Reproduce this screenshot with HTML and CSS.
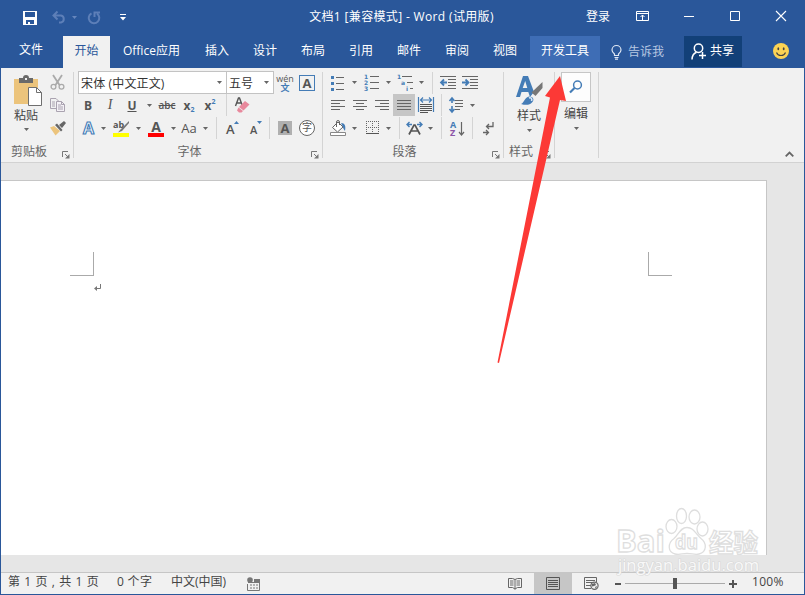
FILE: index.html
```html
<!DOCTYPE html>
<html lang="zh-CN">
<head>
  <meta charset="UTF-8">
  <meta name="viewport" content="width=device-width, initial-scale=1.0">
  <title>文档1 - Word</title>
  <link rel="stylesheet" href="styles.css">
</head>
<body>

<svg class="defs" width="0" height="0">
  <symbol id="caret" viewBox="0 0 5 3"><path d="M0 0h5L2.500 3z" fill="#666"/></symbol>
  <symbol id="launcher" viewBox="0 0 8 8">
    <path d="M.5 6V.5H6M3 3l3 3" fill="none" stroke="#777"/>
    <path d="M7.500 3v4.500H3z" fill="#777"/>
  </symbol>
</svg>

<div class="window">

  <header class="titlebar">
    <div class="quick">
      <svg class="save" width="14" height="14" viewBox="0 0 14 14"><path d="M0 0h14v14H0zM2 1v5h10V1zM3 9v4h2v-2h2v2h4V9z" fill="#fff" fill-rule="evenodd"/></svg>
      <svg class="undo" width="14" height="13" viewBox="0 0 14 13"><path d="M1.500 4.500h7.500a3.600 3.600 0 0 1 0 7H7M5.500 .5l-4 4 4 4" fill="none" stroke="#5d7fb8" stroke-width="2"/></svg>
      <svg class="undo-caret" width="5" height="3" viewBox="0 0 5 3"><path d="M0 0h5L2.500 3z" fill="#6686bd"/></svg>
      <svg class="redo" width="14" height="14" viewBox="0 0 14 14"><path d="M4.500 2.300A5.300 5.300 0 1 0 10 2.600M7.500 6V1.500H13" fill="none" stroke="#5d7fb8" stroke-width="2"/></svg>
      <svg class="more" width="6" height="7" viewBox="0 0 6 7"><path d="M0 0h6v1H0zM0 3h6L3 6.500z" fill="#fff"/></svg>
    </div>
    <div class="title">文档1 [兼容模式] - Word (试用版)</div>
    <div class="login">登录</div>
    <div class="win-btn"><svg width="13" height="10" viewBox="0 0 13 10"><path d="M.5 .5h12v9H.5zM.5 2.500h12M6.500 9V4M4.500 6l2-2 2 2" fill="none" stroke="#fff"/></svg></div>
    <div class="win-btn"><svg width="10" height="10" viewBox="0 0 10 10"><path d="M0 5.500h10" stroke="#fff"/></svg></div>
    <div class="win-btn"><svg width="10" height="10" viewBox="0 0 10 10"><path d="M.5 .5h9v9h-9z" fill="none" stroke="#fff"/></svg></div>
    <div class="win-btn"><svg width="10" height="10" viewBox="0 0 10 10"><path d="M0 0l10 10M10 0L0 10" stroke="#fff" stroke-width="1.100"/></svg></div>
  </header>

  <nav class="tabs">
    <div class="tab file">文件</div>
    <div class="tab active">开始</div>
    <div class="tab office">Office应用</div>
    <div class="tab">插入</div>
    <div class="tab">设计</div>
    <div class="tab">布局</div>
    <div class="tab">引用</div>
    <div class="tab">邮件</div>
    <div class="tab">审阅</div>
    <div class="tab">视图</div>
    <div class="tab dev">开发工具</div>
    <div class="tell">
      <svg width="11" height="15" viewBox="0 0 11 15"><path d="M3.500 10.500V9C2 7.800 1 6.500 1 5a4.500 4.500 0 0 1 9 0c0 1.500-1 2.800-2.500 4v1.500zM3.500 12.500h4M4 14.200h3" fill="none" stroke="#dfe7f3" stroke-width="1.200"/></svg>
      <span>告诉我</span>
    </div>
    <div class="share">
      <svg width="16" height="17" viewBox="0 0 16 17"><circle cx="7.500" cy="5.200" r="4.200" fill="none" stroke="#fff" stroke-width="1.500"/><path d="M1 16.500c0-3.500 1.500-6 4.500-7.300M8 12.500h7M11.500 9v7" fill="none" stroke="#fff" stroke-width="1.500"/></svg>
      <span>共享</span>
    </div>
    <svg class="smile" width="16" height="16" viewBox="0 0 16 16"><circle cx="8" cy="8" r="8" fill="#fcd354"/><ellipse cx="5.300" cy="5.800" rx=".9" ry="1.500" fill="#444"/><ellipse cx="10.700" cy="5.800" rx=".9" ry="1.500" fill="#444"/><path d="M3.500 9.500c1.500 4 7.500 4 9 0" fill="none" stroke="#444" stroke-width="1.100"/></svg>
  </nav>

  <section class="ribbon">

    <!-- 剪贴板 -->
    <div class="group clipboard">
      <div class="group-body">
        <div class="big paste">
          <svg width="28" height="31" viewBox="0 0 28 31">
            <path d="M0 3h24v25H0z" fill="#ecc47c"/>
            <path d="M5 2h4a3 3 0 0 1 6 0h4v5H5z" fill="#6a6a6a"/><path d="M11 2h2v2h-2z" fill="#f1f1f1"/>
            <path d="M14.500 11.500h8l5 5v13h-13z" fill="#fff" stroke="#6f6f6f"/><path d="M22.500 11.500v5h5" fill="none" stroke="#6f6f6f"/>
          </svg>
          <span>粘贴</span>
          <svg class="caret"><use href="#caret"/></svg>
        </div>
        <div class="clip-tools">
          <div class="row r1"><svg width="15" height="15" viewBox="0 0 15 15"><path d="M3 0l6.500 10M12 0L5.500 10" stroke="#aaa" stroke-width="1.800"/><circle cx="3.500" cy="11.700" r="2.400" fill="none" stroke="#aaa" stroke-width="1.300"/><circle cx="11.500" cy="11.700" r="2.400" fill="none" stroke="#aaa" stroke-width="1.300"/></svg></div>
          <div class="row r2"><svg width="15" height="14" viewBox="0 0 15 14"><path d="M6 10.500H.5V.5H6l3 3M2 4h3M2 6h3M2 8h3" fill="none" stroke="#aaa3b0"/><path d="M6.500 3.500h5l3 3v7h-8z" fill="#f4f1f6" stroke="#aaa3b0"/><path d="M11.500 3.500v3h3M8 7h3M8 9h5M8 11h5" fill="none" stroke="#aaa3b0"/></svg></div>
          <div class="row r3"><svg width="16" height="15" viewBox="0 0 16 15"><path d="M0 6.500l4-1.500 6 5-4.500 4.500z" fill="#ecc47c"/><path d="M5 4l2-1.500L12.500 9 11 10.500zM9 4l5-4 2 2-4 5z" fill="#666"/></svg></div>
        </div>
      </div>
      <div class="group-label"><span>剪贴板</span><svg class="launcher"><use href="#launcher"/></svg></div>
    </div>

    <!-- 字体 -->
    <div class="group font">
      <div class="row r1">
        <div class="combo name"><span>宋体 (中文正文)</span><svg class="caret"><use href="#caret"/></svg></div>
        <div class="combo size"><span>五号</span><svg class="caret"><use href="#caret"/></svg></div>
        <div class="btn w22 wen"><span>wén</span><b>文</b></div>
        <div class="btn w22"><span class="boxed">A</span></div>
      </div>
      <div class="row r2">
        <div class="btn w22 glyph bold">B</div>
        <div class="btn w22 glyph italic">I</div>
        <div class="btn w22 glyph under">U</div>
        <div class="btn w12"><svg class="caret"><use href="#caret"/></svg></div>
        <div class="btn w24 strike">abc</div>
        <div class="btn w20 glyph script">x<sub>2</sub></div>
        <div class="btn w22 glyph script">x<sup>2</sup></div>
        <div class="sep erase"></div>
        <div class="btn w30"><svg width="15" height="16" viewBox="0 0 15 16"><path d="M.5 9L3.500 1h1l3 8M2 6h4" fill="none" stroke="#555" stroke-width="1.400"/><path d="M4 10l6-6 4.500 3.500-6 6z" fill="#e8889c"/><path d="M3.500 10.500l4.500 3.500-1.500 1.500H4L2 13.500z" fill="#e8889c"/></svg></div>
      </div>
      <div class="row r3">
        <div class="btn w22"><svg width="15" height="16" viewBox="0 0 15 16"><text x="2" y="14" class="effect">A</text></svg></div>
        <div class="btn w8"><svg class="caret"><use href="#caret"/></svg></div>
        <div class="btn w28"><svg width="16" height="17" viewBox="0 0 16 17"><text x="0" y="8" class="ab">ab</text><path d="M16 1L7.500 9.500 5 12.500l4-1.500L16 3z" fill="#777"/><path d="M0 13h16v4H0z" fill="#ff0"/></svg></div>
        <div class="btn w6"><svg class="caret"><use href="#caret"/></svg></div>
        <div class="btn w30"><svg width="16" height="17" viewBox="0 0 16 17"><text x="3.300" y="12" class="color-a">A</text><path d="M0 13h16v4H0z" fill="#f00"/></svg></div>
        <div class="btn w4"><svg class="caret"><use href="#caret"/></svg></div>
        <div class="btn w28 aa">Aa</div>
        <div class="btn w4"><svg class="caret"><use href="#caret"/></svg></div>
        <div class="sep far"></div>
        <div class="btn w30"><svg width="13" height="17" viewBox="0 0 13 17"><text x="0" y="14" class="grow">A</text><path d="M8 4h5L10.500 1z" fill="#447cb6"/></svg></div>
        <div class="btn w18"><svg width="12" height="17" viewBox="0 0 12 17"><text x="0" y="14" class="shrink">A</text><path d="M7 1h5L9.500 4z" fill="#447cb6"/></svg></div>
        <div class="sep mid"></div>
        <div class="btn w30"><span class="shade">A</span></div>
        <div class="btn w14"><span class="ring">字</span></div>
      </div>
      <div class="group-label"><span>字体</span><svg class="launcher"><use href="#launcher"/></svg></div>
    </div>

    <!-- 段落 -->
    <div class="group para">
      <div class="row r1">
        <div class="btn w22"><svg width="14" height="16" viewBox="0 0 14 16"><path d="M0 1h3v3H0zM0 7h3v3H0zM0 13h3v3H0z" fill="#447cb6"/><path d="M5 2.500h8M5 8.500h8M5 14.500h8" stroke="#666"/></svg></div>
        <div class="btn w10"><svg class="caret"><use href="#caret"/></svg></div>
        <div class="btn w26"><svg width="14" height="17" viewBox="0 0 14 17"><g class="num"><text x="-1" y="5">1</text><text x="-1" y="11">2</text><text x="-1" y="17">3</text></g><path d="M5 2.500h9M5 8.500h9M5 14.500h9" stroke="#666"/></svg></div>
        <div class="btn w6"><svg class="caret"><use href="#caret"/></svg></div>
        <div class="btn w28"><svg width="17" height="17" viewBox="0 0 17 17"><g class="num"><text x="0" y="5">1</text><text x="4" y="11">a</text><text x="9" y="17">i</text></g><path d="M5 2.500h10M10 8.500h6M13 14.500h3" stroke="#666"/></svg></div>
        <div class="btn w4"><svg class="caret"><use href="#caret"/></svg></div>
        <div class="sep far"></div>
        <div class="btn w30"><svg width="16" height="14" viewBox="0 0 16 14"><path d="M0 .5h16M8 3.500h8M8 6.500h8M8 9.500h8M0 12.500h16" stroke="#666"/><path d="M7 6.500H1.500M4 3.500l-3 3 3 3" fill="none" stroke="#447cb6" stroke-width="1.800"/></svg></div>
        <div class="btn w14"><svg width="16" height="14" viewBox="0 0 16 14"><path d="M0 .5h16M8 3.500h8M8 6.500h8M8 9.500h8M0 12.500h16" stroke="#666"/><path d="M0 6.500h5.500M3.500 3.500l3 3-3 3" fill="none" stroke="#447cb6" stroke-width="1.800"/></svg></div>
      </div>
      <div class="row r2">
        <div class="btn w22"><svg width="14" height="11" viewBox="0 0 14 11"><path d="M0 .5h14M0 3.500h9M0 6.500h14M0 9.500h9" stroke="#666"/></svg></div>
        <div class="btn w22"><svg width="14" height="11" viewBox="0 0 14 11"><path d="M0 .5h14M3 3.500h8M0 6.500h14M3 9.500h8" stroke="#666"/></svg></div>
        <div class="btn w22"><svg width="14" height="11" viewBox="0 0 14 11"><path d="M0 .5h14M5 3.500h9M0 6.500h14M5 9.500h9" stroke="#666"/></svg></div>
        <div class="btn w22 on"><svg width="14" height="11" viewBox="0 0 14 11"><path d="M0 .5h14M0 3.500h14M0 6.500h14M0 9.500h14" stroke="#666"/></svg></div>
        <div class="btn w22"><svg width="16" height="16" viewBox="0 0 16 16"><path d="M.5 0v15M15.500 0v15M3 3h10M5 .5L2.500 3 5 5.500M11 .5L13.500 3 11 5.500" fill="none" stroke="#447cb6" stroke-width="1.200"/><path d="M2 7.500h12M2 9.500h12M2 11.500h12M2 13.500h12M2 15.500h8" stroke="#555"/></svg></div>
        <div class="sep spacing"></div>
        <div class="btn w28"><svg width="15" height="16" viewBox="0 0 15 16"><path d="M3 1v5M3 9v6M.5 4L3 1l2.500 3M.5 12L3 15l2.500-3" fill="none" stroke="#447cb6" stroke-width="1.600"/><path d="M6 3.500h8M6 6.500h8M6 9.500h8M6 12.500h5" stroke="#666"/></svg></div>
        <div class="btn w4"><svg class="caret"><use href="#caret"/></svg></div>
      </div>
      <div class="row r3">
        <div class="btn w22"><svg width="16" height="16" viewBox="0 0 16 16"><path d="M2.500 7.500L8 2l5 5-5.500 5z" fill="#fff" stroke="#666"/><path d="M6.500 7V2a1.500 1.500 0 0 1 3 0v3" fill="none" stroke="#666"/><path d="M11 3c4 0 5 3 4 8-1-1-2-3-2-4z" fill="#447cb6"/><path d="M.5 12.500h15v3H.5z" fill="#fff" stroke="#888"/></svg></div>
        <div class="btn w10"><svg class="caret"><use href="#caret"/></svg></div>
        <div class="btn w26"><svg width="13" height="14" viewBox="0 0 13 14"><path d="M0 .5h13M0 6.500h13M.5 0v12M6.500 0v12M12.500 0v12" stroke="#666" stroke-dasharray="1 1"/><path d="M0 12.500h13" stroke="#555"/></svg></div>
        <div class="btn w6"><svg class="caret"><use href="#caret"/></svg></div>
        <div class="sep mid-far"></div>
        <div class="btn w28"><svg width="17" height="14" viewBox="0 0 17 14"><path d="M3 13.500L8 4h1l5 9.500M5 10h7" fill="none" stroke="#555" stroke-width="1.700"/><path d="M1 3.500h5M3.500 1L1 3.500 3.500 6M16 3.500h-5M13.500 1L16 3.500 13.500 6" fill="none" stroke="#447cb6" stroke-width="1.400"/></svg></div>
        <div class="btn w4"><svg class="caret"><use href="#caret"/></svg></div>
        <div class="sep far"></div>
        <div class="btn w30"><svg width="15" height="17" viewBox="0 0 15 17"><text x="0" y="8" class="sa">A</text><text x="0" y="16" class="sz">Z</text><path d="M11.500 2v13M9 12l2.500 3 2.500-3" fill="none" stroke="#666" stroke-width="1.200"/></svg></div>
        <div class="sep near"></div>
        <div class="btn w30"><svg width="11" height="13" viewBox="0 0 11 13"><path d="M10 0v4.500H4M6 2L3.500 4.500 6 7M0 10.500h5M3 8l2.500 2.500L3 13" fill="none" stroke="#666" stroke-width="1.300"/></svg></div>
      </div>
      <div class="group-label"><span>段落</span><svg class="launcher"><use href="#launcher"/></svg></div>
    </div>

    <!-- 样式 -->
    <div class="group style">
      <div class="group-body">
        <div class="big">
          <svg width="28" height="31" viewBox="0 0 28 31"><path d="M1 22L8 1h5l6 16-4 5-1.700-5H6.500L5 22zM7.700 13h4.600L10.200 6z" fill="#447cb6" fill-rule="evenodd"/><path d="M27.500 7v6l-7 8-4-3.500z" fill="#777"/><path d="M6 29c3-1 4-7 8-7.500 4 0 6 3 3 6-2 2.500-6 3-11 1.500z" fill="#447cb6"/><path d="M14 23c2-1 3.500 1 2.500 3" fill="none" stroke="#dceaf7" stroke-width="1.600"/></svg>
          <span>样式</span>
          <svg class="caret"><use href="#caret"/></svg>
        </div>
      </div>
      <div class="group-label"><span>样式</span><svg class="launcher"><use href="#launcher"/></svg></div>
    </div>

    <!-- 编辑 -->
    <div class="group edit">
      <div class="big">
        <div class="find"><svg width="14" height="14" viewBox="0 0 14 14"><circle cx="8.500" cy="5" r="3.900" fill="none" stroke="#447cb6" stroke-width="1.500"/><path d="M5.500 8L1 12.500" stroke="#447cb6" stroke-width="2.200"/></svg></div>
        <span>编辑</span>
        <svg class="caret"><use href="#caret"/></svg>
      </div>
    </div>

    <svg class="collapse" width="9" height="6" viewBox="0 0 9 6"><path d="M.7 5.300L4.500 1.500l3.800 3.800" fill="none" stroke="#666" stroke-width="1.800"/></svg>
  </section>

  <main class="workspace">
    <div class="page">
      <div class="corners">
        <div class="corner left"></div>
        <div class="corner right"></div>
      </div>
      <svg class="enter" width="8" height="8" viewBox="0 0 8 8"><path d="M6.500 0v4.500H2" fill="none" stroke="#777"/><path d="M0 4.500L3 2v5z" fill="#777"/></svg>
    </div>
  </main>

  <footer class="status">
    <span class="pages">第 1 页 , 共 1 页</span>
    <span class="words">0 个字</span>
    <span class="lang">中文(中国)</span>
    <svg class="macro" width="13" height="14" viewBox="0 0 13 14"><path d="M7 2.500h5.500v11H.5V7M1 5.500h11M3 8h2M6 8h2M9 8h2M3 11h2M6 11h2M9 11h2" fill="none" stroke="#777"/><path d="M7 2h6v3H7z" fill="#777"/><circle cx="3" cy="3" r="2.800" fill="#777"/></svg>
    <div class="views">
      <div class="view"><svg width="14" height="13" viewBox="0 0 14 13"><path d="M7 2.500v10M.5 1.500h4L7 2.500l2.500-1h4v9h-4L7 12l-2.500-1.500h-4zM2 4h3.500M2 6h3.500M2 8h3.500M8.500 4H12M8.500 6H12M8.500 8H12" fill="none" stroke="#666"/></svg></div>
      <div class="view on"><svg width="14" height="13" viewBox="0 0 14 13"><path d="M.5 .5h13v12H.5zM2 3.500h10M2 5.500h10M2 7.500h10M2 9.500h10" fill="none" stroke="#555"/></svg></div>
      <div class="view"><svg width="15" height="13" viewBox="0 0 15 13"><path d="M12.500 5V.5H.5v11H7M2 3.500h9M2 5.500h7M2 8.500h5" fill="none" stroke="#666"/><circle cx="10.500" cy="8.800" r="3.600" fill="#f1f1f1" stroke="#666" stroke-width="1.200"/><path d="M8 7l3-1 1 2-2 1-2 .5zM11 10l2-1-1 3z" fill="#666"/></svg></div>
    </div>
    <div class="zoom">
      <i class="minus"></i>
      <div class="track"><i class="thumb"></i></div>
      <svg width="8" height="8" viewBox="0 0 8 8"><path d="M0 4h8M4 0v8" stroke="#555" stroke-width="2"/></svg>
      <span>100%</span>
    </div>
  </footer>

  <svg class="watermark" width="150" height="72" viewBox="0 0 150 72">
    <g class="wm-shape">
      <ellipse cx="58.500" cy="22.500" rx="5.500" ry="7"/>
      <ellipse cx="68.500" cy="12" rx="5" ry="7.500"/>
      <ellipse cx="81.500" cy="13" rx="5.500" ry="7"/>
      <ellipse cx="89.500" cy="25" rx="5.500" ry="7"/>
      <path d="M74 23.500c-7 0-8 7-13 11-7 5-6 14 1 15.500 5 1 7-.5 12-.5s8 1.500 12 .5c8-2 8-11 2-15.500-6-5-7-11-14-11z"/>
    </g>
    <text x="3" y="48" class="wm-bai" textLength="49" lengthAdjust="spacingAndGlyphs">Bai</text>
    <text x="62" y="45" class="wm-du" textLength="23" lengthAdjust="spacingAndGlyphs">du</text>
    <text x="96" y="48" class="wm-cn" textLength="49" lengthAdjust="spacingAndGlyphs">经验</text>
    <text x="5" y="67" class="wm-url" textLength="141" lengthAdjust="spacingAndGlyphs">jingyan.baidu.com</text>
  </svg>

  <svg class="pointer" width="72" height="290" viewBox="0 0 72 290"><path d="M64 2L49 22l5 1.500L1.500 288.500 3 289 64 26l6 1z" fill="#fc3936"/></svg>

</div>

</body>
</html>
```
FILE: styles.css
```css
* {
  box-sizing: border-box;
}
body {
  margin: 0;
  font-family: "Open Sans", "Noto Sans CJK SC", sans-serif;
  font-size: 12px;
  color: #444;
  overflow: hidden;
}
svg {
  display: block;
  flex: none;
  overflow: visible;
}
.defs {
  position: absolute;
}
.window {
  position: relative;
  width: 805px;
  height: 595px;
  display: flex;
  flex-direction: column;
  background: #2a579a;
  padding: 0 1px 1px;
  white-space: nowrap;
}

/* title bar */
.titlebar {
  height: 36px;
  display: flex;
  align-items: center;
  color: #fff;
  padding-bottom: 4px;
}
.quick {
  width: 200px;
  display: flex;
  align-items: center;
  padding-left: 22px;
  padding-top: 3px;
}
.undo {
  margin-left: 15px;
}
.undo-caret {
  margin-left: 6px;
}
.redo {
  margin-left: 10px;
}
.more {
  margin-left: 19px;
}
.title {
  width: 401px;
  text-align: center;
  letter-spacing: 0.35px;
}
.login {
  width: 40px;
  margin-left: -24px;
  padding-left: 8px;
}
.win-btn {
  width: 46px;
  display: flex;
  justify-content: center;
}
.win-btn:nth-child(4) {
  width: 48px;
}

/* tabs */
.tabs {
  height: 32px;
  display: flex;
  color: #fff;
  line-height: 30px;
}
.tab {
  width: 48px;
  text-align: center;
}
.file {
  width: 62px;
  padding-right: 2px;
  line-height: 27px;
}
.active {
  width: 47px;
  background: #f1f1f1;
  color: #2a579a;
}
.office {
  width: 83px;
}
.dev {
  width: 70px;
  margin-left: 1px;
  background: #3e6db5;
}
.tell {
  width: 84px;
  padding-left: 11px;
  display: flex;
  align-items: center;
  gap: 6px;
  color: #b8c8e2;
}
.share {
  width: 58px;
  height: 31px;
  background: #124078;
  display: flex;
  align-items: center;
  padding-left: 7px;
  gap: 3px;
}
.share span {
  line-height: 27px;
  padding-bottom: 3px;
}
.smile {
  margin: 7px 0 0 31px;
}

/* ribbon */
.ribbon {
  position: relative;
  height: 95px;
  background: #f1f1f1;
  border-bottom: 1px solid #d2d2d2;
  display: flex;
}
.group {
  position: relative;
  height: 94px;
  padding-top: 3px;
}
.group::after {
  content: "";
  position: absolute;
  right: 0;
  top: 4px;
  width: 1px;
  height: 86px;
  background: #d4d4d4;
}
.clipboard { width: 73px; }
.font { width: 249px; padding-left: 4px; }
.para { width: 181px; padding-left: 4px; }
.style { width: 51px; }
.edit { width: 44px; }

.group-body {
  display: flex;
  height: 69px;
}
.row {
  display: flex;
  align-items: center;
}
.r1 { height: 23px; }
.r2 { height: 22px; }
.r3 { height: 24px; }

.group-label {
  position: relative;
  height: 22px;
  line-height: 23px;
  color: #666;
  text-align: center;
}
.clipboard .group-label {
  padding-right: 17px;
}
.font .group-label {
  padding-right: 22px;
}
.para .group-label {
  padding-right: 22px;
}
.style .group-label {
  padding-right: 17px;
}
.launcher {
  position: absolute;
  right: 4px;
  top: 11px;
  width: 8px;
  height: 8px;
}
.caret {
  width: 5px;
  height: 3px;
}
.big {
  width: 50px;
  display: flex;
  flex-direction: column;
  align-items: center;
  padding-top: 4px;
}
.big span {
  line-height: 20px;
}
.big .caret {
  margin-top: 3px;
}
.paste {
  padding-top: 5px;
}
.paste > svg:first-child {
  margin-left: 4px;
}
.paste span {
  line-height: 18px;
}
.clip-tools {
  width: 16px;
}
.clip-tools .row {
  margin-left: -1px;
}
.edit .big {
  width: 42px;
  padding-top: 1px;
}
.find {
  width: 30px;
  height: 30px;
  background: #fdfdfd;
  border: 1px solid #c6c6c6;
  display: flex;
  align-items: center;
  justify-content: center;
}
.edit .big span {
  margin-top: 2px;
}
.collapse {
  margin: 83px 0 0 186px;
}

.btn {
  display: flex;
  align-items: center;
  justify-content: center;
  height: 22px;
  color: #555;
}
.w4 { width: 4px; }
.w6 { width: 6px; }
.w8 { width: 8px; }
.w10 { width: 10px; }
.w12 { width: 12px; }
.w14 { width: 14px; }
.w18 { width: 18px; }
.w20 { width: 20px; }
.w22 { width: 22px; }
.w24 { width: 24px; }
.w26 { width: 26px; }
.w28 { width: 28px; }
.w30 { width: 30px; }
.on {
  background: #c6c6c6;
}
.sep {
  width: 1px;
  height: 22px;
  background: #d4d4d4;
}
.near { margin-left: 0; }
.spacing { margin-left: 4px; }
.mid { margin-left: 4px; }
.erase { margin-left: 5px; }
.mid-far { margin-left: 8px; }
.far { margin-left: 9px; }

/* font group */
.combo {
  height: 23px;
  background: #fff;
  border: 1px solid #c3c3c3;
  display: flex;
  align-items: center;
  justify-content: space-between;
  padding: 0 4px 0 2px;
  color: #333;
}
.name { width: 149px; }
.name span { letter-spacing: 0.15px; }
.size { width: 48px; margin-left: -1px; }
.font .r2 .btn:first-child,
.font .r3 .btn:first-child {
  margin-left: -1px;
}
.wen {
  flex-direction: column;
  font-size: 9px;
}
.wen span {
  line-height: 9px;
}
.wen b {
  color: #447cb6;
  line-height: 9px;
}
.boxed {
  width: 16px;
  height: 16px;
  border: 1px solid #447cb6;
  font: bold 13px/14px "Open Sans", sans-serif;
  text-align: center;
}
.glyph {
  font-size: 12px;
  font-weight: bold;
}
.italic {
  font-family: "Liberation Serif", serif;
  font-style: italic;
  font-weight: normal;
  font-size: 14px;
}
.under {
  text-decoration: underline;
}
.strike {
  font-size: 10px;
  font-weight: 600;
  text-decoration: line-through;
}
.script sub,
.script sup {
  font-size: 7px;
  line-height: 7px;
  color: #447cb6;
}
.script sub { margin-top: 8px; }
.script sup { margin-top: -8px; }
.aa {
  font-size: 13px;
}
.effect {
  font: bold 16px "Open Sans", sans-serif;
  fill: #f7fbff;
  stroke: #447cb6;
  stroke-width: 1.1px;
}
.ab {
  font: bold 9px "Open Sans", sans-serif;
  fill: #555;
}
.color-a {
  font: bold 14px "Open Sans", sans-serif;
  fill: #555;
}
.grow {
  font: 600 13px "Open Sans", sans-serif;
  fill: #555;
}
.shrink {
  font: 600 11px "Open Sans", sans-serif;
  fill: #555;
}
.shade {
  width: 14px;
  height: 14px;
  background: #b0b0b0;
  font: bold 13px/14px "Open Sans", sans-serif;
  text-align: center;
}
.ring {
  flex: none;
  width: 16px;
  height: 16px;
  border: 1px solid #666;
  border-radius: 50%;
  background: #fff;
  font-size: 10px;
  line-height: 13px;
  text-align: center;
}

/* paragraph group */
.num {
  font: bold 6px "DejaVu Sans", sans-serif;
  fill: #447cb6;
}
.sa,
.sz {
  font: bold 9px "Open Sans", sans-serif;
  fill: #447cb6;
}
.sz { fill: #8c56a8; }

/* document */
.workspace {
  height: 409px;
  background: #e6e6e6;
  padding-top: 17px;
}
.page {
  width: 766px;
  height: 375px;
  background: #fff;
  border-top: 1px solid #c6c6c6;
  border-right: 1px solid #c6c6c6;
  padding: 71px 94px 0 69px;
}
.corners {
  display: flex;
  justify-content: space-between;
}
.corner {
  width: 24px;
  height: 24px;
  border-bottom: 1px solid #aaa;
}
.left { border-right: 1px solid #aaa; }
.right { border-left: 1px solid #aaa; }
.enter {
  margin: 8px 0 0 24px;
}

/* status bar */
.status {
  height: 22px;
  background: #f1f1f1;
  border-top: 1px solid #c6c6c6;
  display: flex;
  align-items: center;
  line-height: 18px;
}
.status > span,
.zoom span {
  padding-bottom: 3px;
}
.pages {
  width: 109px;
  padding-left: 7px;
  letter-spacing: 0.6px;
}
.words {
  width: 54px;
  padding-left: 7px;
  letter-spacing: 0.3px;
}
.lang {
  width: 75px;
  padding-left: 7px;
}
.macro {
  margin-left: 8px;
}
.views {
  display: flex;
  margin-left: 236px;
}
.view {
  width: 38px;
  height: 21px;
  display: flex;
  align-items: center;
  justify-content: center;
}
.zoom {
  display: flex;
  align-items: center;
  margin-left: 5px;
}
.minus {
  width: 6px;
  height: 2px;
  background: #555;
}
.track {
  width: 100px;
  height: 11px;
  margin: 0 4px;
  display: flex;
  justify-content: center;
  background: linear-gradient(#aaa, #aaa) 0 5px / 100% 1px no-repeat;
}
.thumb {
  width: 4px;
  height: 11px;
  background: #555;
}
.zoom span {
  margin-left: 15px;
  letter-spacing: 0.3px;
}

/* overlays */
.watermark {
  position: absolute;
  left: 613px;
  top: 504px;
}
.wm-shape,
.wm-bai,
.wm-du,
.wm-cn {
  fill: #fff;
  stroke: #dedede;
  stroke-width: 1.3px;
}
.wm-bai {
  font: bold 31px "Open Sans", sans-serif;
}
.wm-du {
  font: bold 20px "Open Sans", sans-serif;
}
.wm-cn {
  font: bold 25px "Noto Sans CJK SC", sans-serif;
}
.wm-url {
  font: 16px "Open Sans", sans-serif;
  fill: #f8f8f8;
  stroke: #d8d8d8;
  stroke-width: 1.2px;
  paint-order: stroke;
}
.pointer {
  position: absolute;
  left: 496px;
  top: 74px;
}
```
